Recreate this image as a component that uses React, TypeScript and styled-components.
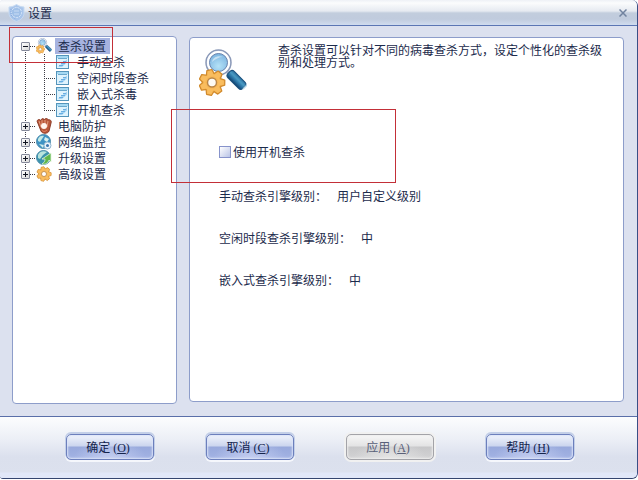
import React from 'react';
import styled, { createGlobalStyle, css } from 'styled-components';

const Global = createGlobalStyle`
  * { box-sizing: border-box; }
  body {
    margin: 0;
    background: #ffffff;
    color: #1c2b4c;
    font: 12px/14px "Noto Sans CJK SC", "Liberation Sans", sans-serif;
  }
  button { font: inherit; color: inherit; padding: 0; margin: 0; border: 0; background: none; }
  ul, dl, dd, p, h1 { margin: 0; padding: 0; list-style: none; font-size: 12px; font-weight: 400; }
`;

const line = '#8d9dca';
const dotsDown = 'repeating-linear-gradient(#3c3c44 0 1px, transparent 1px 2px)';
const dotsAcross = 'repeating-linear-gradient(90deg, #3c3c44 0 1px, transparent 1px 2px)';

const Window = styled.div`
  position: relative;
  display: grid;
  grid-template-rows: auto 1fr auto;
  min-height: calc(100vh - 1px);
  border-right: 1px solid #3a4f86;
  border-bottom: 1px solid #34456f;
  border-radius: 3px 6px 6px 3px;
  background: #dce1ef;
  overflow: hidden;
`;

const TitleBar = styled.header`
  display: flex;
  align-items: center;
  gap: 3px;
  height: 26px;
  padding: 0 10px 0 8px;
  border-bottom: 1px solid #5b76b4;
  background: linear-gradient(#eef1f6 0, #fbfcfd 3px, #e6eaf1 11px, #c2cddd 13px, #c0cbdd 19px, #d0dcef 25px);
`;

const Title = styled.h1`
  flex: 1;
`;

const CloseButton = styled.button`
  display: flex;
  align-items: center;
  justify-content: center;
  width: 8px;
  height: 18px;
`;

const Content = styled.main`
  display: grid;
  grid-template-columns: 165px 1fr;
  gap: 12px;
  padding: 10px 13px 12px 12px;
`;

const Panel = styled.section`
  border: 1px solid ${line};
  border-radius: 4px;
  background: #ffffff;
`;

const TreePanel = styled(Panel)`
  padding-top: 1px;
`;

const DetailPanel = styled(Panel)`
  margin: 1px 0 2px;
`;

const Branch = styled.li<{ $place: 'first' | 'middle' | 'last' }>`
  background: ${dotsDown} no-repeat 12px ${p => (p.$place === 'first' ? '8px' : '0')} / 1px
    ${p => (p.$place === 'last' ? '8px' : '100%')};
`;

const BranchRow = styled.div`
  display: flex;
  align-items: center;
  height: 16px;
  padding-left: 8px;
`;

const Expander = styled.button`
  display: flex;
  width: 9px;
  height: 9px;
  border: 1px solid #85899a;
  border-radius: 1px;
  background: linear-gradient(135deg, #ffffff, #d8d8d8);
`;

const Twig = styled.span`
  width: 6px;
  height: 1px;
  background: ${dotsAcross};
`;

const NodeLabel = styled.button<{ $selected?: boolean }>`
  height: 16px;
  margin-left: 3px;
  padding: 0 4px 0 3px;
  white-space: nowrap;
  background: ${p => (p.$selected ? '#a6b3e0' : 'transparent')};
`;

const Leaf = styled.li<{ $last?: boolean }>`
  display: flex;
  align-items: center;
  gap: 2px;
  height: 16px;
  padding-left: 43px;
  background:
    ${dotsDown} no-repeat 31px 0 / 1px ${p => (p.$last ? '8px' : '100%')},
    ${dotsAcross} no-repeat 31px 8px / 12px 1px;
`;

const Intro = styled.div`
  display: flex;
  align-items: flex-start;
  gap: 31px;
  padding: 11px 16px 0 9px;
`;

const IntroText = styled.p`
  flex: 1;
  margin-top: -5px;
  line-height: 12px;
`;

const Settings = styled.div`
  padding: 48px 16px 16px 29px;
`;

const CheckLabel = styled.label`
  display: flex;
  align-items: center;
  gap: 2px;
`;

const Checkbox = styled.input`
  appearance: none;
  width: 12px;
  height: 12px;
  margin: 0;
  border: 1px solid #8793cb;
  background: linear-gradient(135deg, #ffffff, #b9c4e6);
  &:checked { background: #7f90cc; }
`;

const Levels = styled.dl`
  display: flex;
  flex-direction: column;
  gap: 28px;
  margin-top: 30px;
`;

const Level = styled.div`
  display: flex;
  gap: 10px;
`;

const Footer = styled.footer`
  display: flex;
  justify-content: center;
  gap: 48px;
  padding: 15px 0 16px 2px;
  border-top: 1px solid #5a6fa9;
  background: linear-gradient(#fcfdfe 0, #eceff6 22px, #dbe0ed 40px, #dce1ee 55px, #e1e7f8 56px);
`;

const disabledLook = css`
  border-color: #a3a3a8;
  color: #596079;
  background:
    radial-gradient(ellipse at 50% 100%, #e4e4e4 0, transparent 60%),
    linear-gradient(#f7f7f7 0, #e3e3e4 11px, #c7c7c9 12px, #d3d3d5 100%);
  box-shadow: inset 0 0 2px 1px #eeeeee, 0 0 0 2px #f1f1f1;
`;

const ActionButton = styled.button`
  width: 88px;
  height: 26px;
  margin: 2px;
  padding: 0 3px 0 0;
  border: 1px solid #6c7fbc;
  border-radius: 5px;
  color: #14244d;
  background:
    radial-gradient(ellipse at 50% 100%, #c3cdf0 0, transparent 60%),
    linear-gradient(#f2f5fc 0, #cbd5ee 11px, #98a9dc 12px, #a3b3e4 100%);
  box-shadow: inset 0 0 2px 1px #dce4f8, 0 -1px 0 1px #c3cfe8, 0 1px 0 1px #f5f7fc;
  &:disabled { ${disabledLook} }
`;

const Key = styled.span`
  margin-left: 3px;
  font-family: "Liberation Serif", serif;
`;

const Callout = styled.div<{ $x: number; $y: number; $w: number; $h: number }>`
  position: absolute;
  left: ${p => p.$x}px;
  top: ${p => p.$y}px;
  width: ${p => p.$w}px;
  height: ${p => p.$h}px;
  border: 1px solid #c32f38;
  pointer-events: none;
`;

const teeth = [0, 1, 2, 3, 4, 5, 6].map(n => n * 360 / 7);

function Gear({ x, y, r, hole }: { x: number; y: number; r: number; hole: string }) {
  return (
    <g transform={`translate(${x} ${y})`}>
      {teeth.map(a => (
        <path key={a} transform={`rotate(${a - 12}) scale(${r})`} d="M-.36-.55-.2-1.02.2-1.02.36-.55Z"
          fill="#f6b350" stroke="#d18a2c" strokeWidth=".1" strokeLinejoin="round" />
      ))}
      <circle r={r * 0.72} fill="#f8b856" stroke="#dd9a38" strokeWidth={r * 0.04} />
      {teeth.map(a => (
        <path key={a} transform={`rotate(${a - 12}) scale(${r})`} d="M-.28-.5-.15-.94.15-.94.28-.5Z" fill="#f9bd5f" />
      ))}
      <circle r={r * 0.36} fill={hole} stroke="#bb8748" strokeWidth={r * 0.12} />
    </g>
  );
}

function ScanIcon({ size }: { size: number }) {
  const id = `scan${size}`;
  return (
    <svg width={size} height={size} viewBox="0 0 48 48" aria-hidden="true">
      <defs>
        <radialGradient id={`${id}a`} cx=".5" cy=".7" r=".7">
          <stop offset="0" stopColor="#b4e2f7" />
          <stop offset="1" stopColor="#7cb4e0" />
        </radialGradient>
        <linearGradient id={`${id}b`} x1="0" y1="0" x2="0" y2="1">
          <stop offset="0" stopColor="#2b719f" />
          <stop offset=".35" stopColor="#4a9ac4" />
          <stop offset=".7" stopColor="#246c9e" />
          <stop offset="1" stopColor="#123f68" />
        </linearGradient>
      </defs>
      <path d="m26 20 5 5" stroke="#a4b2cb" strokeWidth="4" />
      <rect x="30" y="19" width="21" height="9" rx="3" transform="rotate(45 30 23.500)" fill={`url(#${id}b)`} stroke="#1d5380" />
      <path d="m44 40 5-5" stroke="#b4d5e7" strokeWidth="1.500" />
      <circle cx="19.500" cy="13.500" r="12.500" fill="#d4e0f0" stroke="#8b99b8" strokeWidth="1.500" />
      <circle cx="19.500" cy="13.500" r="10.500" fill="none" stroke="#ffffff" strokeWidth="2" />
      <circle cx="19.500" cy="13.500" r="9" fill={`url(#${id}a)`} stroke="#6b86b0" />
      <path d="M13 13c1-5 6-7 11-5-4 0-8 2-11 5Z" fill="#ffffff" opacity=".5" />
      <Gear x={13} y={33.5} r={12.5} hole="#fdfaf3" />
    </svg>
  );
}

function PageIcon() {
  return (
    <svg width="13" height="14" viewBox="0 0 13 14" aria-hidden="true">
      <rect x=".5" y=".5" width="12" height="13" fill="#dff3fd" stroke="#5595bb" />
      <path d="M1 1h11v2H1z" fill="#a5d9f3" />
      <path d="M2 3.500h9" stroke="#6aa8cd" />
      <path d="M2 12 11 4.500v3L6 12Z" fill="#a2d3f3" />
      <path d="M7 6.500h3M5 8.500h4M3 10.500h4" stroke="#6aaee2" />
    </svg>
  );
}

function GloveIcon() {
  return (
    <svg width="16" height="16" viewBox="0 0 16 16" aria-hidden="true">
      <path d="M1 3c1-2 3-2 4 0C5 0 8 0 8 2c1-2 4-2 4 0 2-1 4 1 3 3l-2 8c-1 3-7 3-8 0Z" fill="#b9573a" stroke="#8b3d29" />
      <path d="m3 3 2 6M6 2v4M9 2v4M12 3l-1 6" stroke="#e29a7c" />
      <circle cx="8" cy="8" r="3" fill="#fff4ee" />
      <path d="M6 12c1 2 3 2 5 0" stroke="#e78767" fill="none" />
    </svg>
  );
}

function GlobeIcon({ variant }: { variant: 'network' | 'upgrade' }) {
  const network = variant === 'network';
  return (
    <svg width="16" height="16" viewBox="0 0 16 16" aria-hidden="true">
      <circle cx="7.500" cy="7.500" r="7" fill={network ? '#3f93c4' : '#3c94ad'} stroke="#4c8cab" />
      {network ? (
        <>
          <path d="M2 5c1-3 4-4 6-3L6 5 4 8 2 7Z" fill="#c4ebe6" />
          <path d="m9 3 4 2-2 3-3-2ZM3 10l5 1-1 3Z" fill="#d8f1ee" />
          <circle cx="11.500" cy="11.500" r="3.500" fill="#edf6fc" stroke="#8fb4cf" />
          <circle cx="11.500" cy="11.500" r="1.500" fill="#3d78b1" />
        </>
      ) : (
        <>
          <path d="M2 5c1-3 5-5 9-3L7 5 4 9 2 8Z" fill="#b9e4dd" />
          <path d="M6 14c3-2 3-4 3-5L6 9l9-6v9l-2-2c-1 3-4 5-7 4Z" fill="#5fb64b" stroke="#e1f4da" strokeWidth=".8" />
        </>
      )}
    </svg>
  );
}

function GearIcon() {
  return (
    <svg width="16" height="16" viewBox="0 0 16 16" aria-hidden="true">
      <Gear x={8} y={8} r={7} hole="#ffffff" />
    </svg>
  );
}

function ShieldIcon() {
  return (
    <svg width="17" height="18" viewBox="0 0 17 18" aria-hidden="true">
      <path d="M1 3c3 0 5-1 7.500-2.500C11 2 13 3 16 3v6c0 4-3 7-7.500 8.500C4 16 1 13 1 9Z" fill="#a9c5eb" stroke="#c7daf1" />
      <circle cx="8.500" cy="8.500" r="5" fill="#a0c0e8" stroke="#dceafa" strokeDasharray="2 1" />
      <path d="M6 7h5M6 10h5" stroke="#c9dcf4" />
      <path d="M3 5v4c0 3 2 5 5 6" stroke="#86abe0" fill="none" strokeDasharray="1 1" />
    </svg>
  );
}

const scans = ['手动查杀', '空闲时段查杀', '嵌入式杀毒', '开机查杀'];

const groups = [
  { name: '电脑防护', icon: <GloveIcon /> },
  { name: '网络监控', icon: <GlobeIcon variant="network" /> },
  { name: '升级设置', icon: <GlobeIcon variant="upgrade" /> },
  { name: '高级设置', icon: <GearIcon /> },
];

const levels = [
  ['手动查杀引擎级别：', '用户自定义级别'],
  ['空闲时段查杀引擎级别：', '中'],
  ['嵌入式查杀引擎级别：', '中'],
];

const actions = [
  { name: '确定', letter: 'O' },
  { name: '取消', letter: 'C' },
  { name: '应用', letter: 'A', disabled: true },
  { name: '帮助', letter: 'H' },
];

function BranchHead({ name, icon, open }: { name: string; icon: React.ReactNode; open?: boolean }) {
  return (
    <BranchRow>
      <Expander aria-label={name} aria-expanded={!!open}>
        <svg width="7" height="7" viewBox="0 0 7 7" aria-hidden="true">
          <path d={open ? 'M1 3.500h5' : 'M1 3.500h5M3.500 1v5'} stroke="#101420" />
        </svg>
      </Expander>
      <Twig />
      {icon}
      <NodeLabel $selected={open}>{name}</NodeLabel>
    </BranchRow>
  );
}

export default function App() {
  return (
    <>
      <Global />
      <Window>
        <TitleBar>
          <ShieldIcon />
          <Title>设置</Title>
          <CloseButton aria-label="关闭">
            <svg width="8" height="8" viewBox="0 0 8 8" aria-hidden="true">
              <path d="m.5.5 7 7m0-7-7 7" stroke="#71839f" strokeWidth="1.500" />
            </svg>
          </CloseButton>
        </TitleBar>
        <Content>
          <TreePanel as="nav">
            <ul>
              <Branch $place="first">
                <BranchHead name="查杀设置" icon={<ScanIcon size={16} />} open />
                <ul>
                  {scans.map((name, i) => (
                    <Leaf key={name} $last={i === scans.length - 1}>
                      <PageIcon />
                      <NodeLabel>{name}</NodeLabel>
                    </Leaf>
                  ))}
                </ul>
              </Branch>
              {groups.map((g, i) => (
                <Branch key={g.name} $place={i === groups.length - 1 ? 'last' : 'middle'}>
                  <BranchHead name={g.name} icon={g.icon} />
                </Branch>
              ))}
            </ul>
          </TreePanel>
          <DetailPanel>
            <Intro>
              <ScanIcon size={48} />
              <IntroText>查杀设置可以针对不同的病毒查杀方式，设定个性化的查杀级别和处理方式。</IntroText>
            </Intro>
            <Settings>
              <CheckLabel>
                <Checkbox type="checkbox" />
                使用开机查杀
              </CheckLabel>
              <Levels>
                {levels.map(([name, value]) => (
                  <Level key={name}>
                    <dt>{name}</dt>
                    <dd>{value}</dd>
                  </Level>
                ))}
              </Levels>
            </Settings>
          </DetailPanel>
        </Content>
        <Footer>
          {actions.map(a => (
            <ActionButton key={a.name} disabled={a.disabled}>
              {a.name}
              <Key>(<u>{a.letter}</u>)</Key>
            </ActionButton>
          ))}
        </Footer>
        <Callout $x={9} $y={27} $w={104} $h={36} />
        <Callout $x={171} $y={109} $w={225} $h={74} />
      </Window>
    </>
  );
}
